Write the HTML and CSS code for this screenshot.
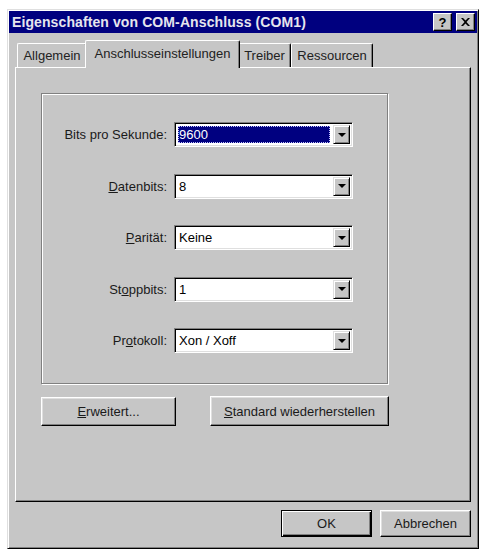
FILE: index.html
```html
<!DOCTYPE html>
<html lang="de">
<head>
    <meta charset="UTF-8">
    <meta name="viewport" content="width=device-width, initial-scale=1.0">
    <title>Eigenschaften von COM-Anschluss (COM1)</title>
    <link rel="stylesheet" href="styles.css">
</head>
<body>
    <div class="window">
        <!-- Titelleiste -->
        <div class="titlebar">
            <span class="title">Eigenschaften von COM-Anschluss (COM1)</span>
            <div class="title-buttons">
                <button class="tbtn help">?</button>
                <button class="tbtn close">
                    <svg width="9" height="8" viewBox="0 0 9 8">
                        <path d="M0 0h2l2.5 2.5L7 0h2L5.5 4 9 8H7L4.5 5.5 2 8H0l3.5-4z" fill="#000"/>
                    </svg>
                </button>
            </div>
        </div>

        <div class="content">
            <!-- Registerkarten -->
            <div class="tabs">
                <div class="tab tab-allgemein">Allgemein</div>
                <div class="tab active">Anschlusseinstellungen</div>
                <div class="tab tab-treiber">Treiber</div>
                <div class="tab tab-ressourcen">Ressourcen</div>
            </div>

            <div class="panel">
                <div class="group">
                    <label class="field-label">Bits pro Sekunde:</label>
                    <div class="combo">
                        <span class="combo-value selected"><span>9600</span></span>
                        <span class="combo-drop"><i class="arrow"></i></span>
                    </div>

                    <label class="field-label"><u>D</u>atenbits:</label>
                    <div class="combo">
                        <span class="combo-value">8</span>
                        <span class="combo-drop"><i class="arrow"></i></span>
                    </div>

                    <label class="field-label"><u>P</u>arität:</label>
                    <div class="combo">
                        <span class="combo-value">Keine</span>
                        <span class="combo-drop"><i class="arrow"></i></span>
                    </div>

                    <label class="field-label">St<u>o</u>ppbits:</label>
                    <div class="combo">
                        <span class="combo-value">1</span>
                        <span class="combo-drop"><i class="arrow"></i></span>
                    </div>

                    <label class="field-label">Pr<u>o</u>tokoll:</label>
                    <div class="combo">
                        <span class="combo-value">Xon / Xoff</span>
                        <span class="combo-drop"><i class="arrow"></i></span>
                    </div>
                </div>

                <div class="panel-buttons">
                    <button class="btn btn-erweitert"><u>E</u>rweitert...</button>
                    <button class="btn btn-standard"><u>S</u>tandard wiederherstellen</button>
                </div>
            </div>

            <!-- OK / Abbrechen -->
            <div class="footer">
                <button class="btn btn-footer default">OK</button>
                <button class="btn btn-footer">Abbrechen</button>
            </div>
        </div>
    </div>
</body>
</html>
```

FILE: styles.css
```css
body {
    margin: 0;
    background-color: #ffffff;
    font-family: "Liberation Sans", Arial, sans-serif;
    font-size: 13px;
    color: #000000;
}
.window {
    box-sizing: border-box;
    width: 472px;
    height: 540px;
    margin: 9px 0 0 7px;
    padding: 1px;
    background-color: #c6c6c6;
    border: 1px solid;
    border-color: #dfdfdf #000000 #000000 #dfdfdf;
    box-shadow: inset 1px 1px #ffffff, inset -1px -1px #808080;
    display: flex;
    flex-direction: column;
}
.titlebar {
    height: 22px;
    background-color: #00007f;
    display: flex;
    align-items: center;
    justify-content: space-between;
    padding: 0 2px 0 3px;
}
.title {
    color: #e6e6ee;
    font-weight: bold;
    font-size: 14px;
    letter-spacing: 0.1px;
}
.title-buttons {
    display: flex;
    gap: 4px;
}
.tbtn {
    width: 19px;
    height: 18px;
    padding: 0;
    background-color: #c6c6c6;
    border: 1px solid;
    border-color: #ffffff #000000 #000000 #ffffff;
    box-shadow: inset -1px -1px #808080;
    display: flex;
    align-items: center;
    justify-content: center;
    font-family: "Liberation Sans", Arial, sans-serif;
    font-weight: bold;
    font-size: 13px;
    line-height: 1;
}
.content {
    flex: 1;
    padding: 7px 6px 10px 6px;
    display: flex;
    flex-direction: column;
}

/* Registerkarten */
.tabs {
    height: 27px;
    display: flex;
    align-items: flex-end;
    padding-left: 2px;
}
.tab {
    box-sizing: border-box;
    height: 24px;
    padding: 0 7px;
    border-top: 1px solid #ffffff;
    border-left: 1px solid #ffffff;
    border-right: 1px solid #000000;
    border-radius: 2px 2px 0 0;
    box-shadow: inset -1px 0 #808080;
    display: flex;
    align-items: center;
    justify-content: center;
    color: #222222;
}
.tab-allgemein {
    width: 70px;
}
.tab-treiber {
    width: 53px;
}
.tab-ressourcen {
    width: 82px;
}
.tab.active {
    position: relative;
    z-index: 1;
    width: 155px;
    height: 28px;
    margin: 0 -2px -1px -2px;
    padding-bottom: 3px;
    background-color: #c6c6c6;
}

.panel {
    box-sizing: border-box;
    height: 435px;
    padding: 25px 0 0 25px;
    border: 1px solid;
    border-color: #ffffff #000000 #000000 #ffffff;
    box-shadow: inset -1px -1px #808080;
}
.group {
    box-sizing: border-box;
    width: 347px;
    height: 291px;
    padding: 28px 0 0 1px;
    border: 1px solid #808080;
    box-shadow: 1px 1px #ffffff, inset 1px 1px #ffffff;
    display: grid;
    grid-template-columns: 124px 179px;
    grid-auto-rows: 25px;
    column-gap: 7px;
    row-gap: 26.5px;
}
.field-label {
    display: flex;
    align-items: center;
    justify-content: flex-end;
    color: #1a1a1a;
}

/* Kombinationsfelder */
.combo {
    box-sizing: border-box;
    height: 25px;
    background-color: #ffffff;
    border: 1px solid;
    border-color: #808080 #ffffff #ffffff #808080;
    box-shadow: inset 1px 1px #000000, inset -1px -1px #dfdfdf;
    padding: 2px 2px 2px 2px;
    display: flex;
}
.combo-value {
    flex: 1;
    display: flex;
    align-items: center;
    padding-left: 2px;
}
.combo-value.selected {
    margin: 1px 3px 1px 1px;
    padding-left: 1px;
    background-color: #000080;
    color: #ffffff;
    outline: 1px dotted #c0c0ff;
    outline-offset: -1px;
}
.combo-drop {
    box-sizing: border-box;
    width: 17px;
    background-color: #c6c6c6;
    border: 1px solid;
    border-color: #dfdfdf #000000 #000000 #dfdfdf;
    box-shadow: inset 1px 1px #ffffff, inset -1px -1px #808080;
    display: flex;
    align-items: center;
    justify-content: center;
}
.arrow {
    width: 0;
    height: 0;
    border-left: 4px solid transparent;
    border-right: 4px solid transparent;
    border-top: 4px solid #000000;
}

/* Schaltflächen */
.btn {
    box-sizing: border-box;
    background-color: #c6c6c6;
    border: 1px solid;
    border-color: #ffffff #000000 #000000 #ffffff;
    box-shadow: inset -1px -1px #808080, inset 1px 1px #dfdfdf;
    font-family: "Liberation Sans", Arial, sans-serif;
    font-size: 13px;
    color: #1a1a1a;
    padding: 0;
}
.panel-buttons {
    display: flex;
    align-items: center;
    gap: 34px;
    margin-top: 12px;
}
.btn-erweitert {
    width: 135px;
    height: 29px;
}
.btn-standard {
    width: 179px;
    height: 30px;
}
.footer {
    display: flex;
    justify-content: flex-end;
    gap: 8px;
    margin-top: 8px;
}
.btn-footer {
    width: 91px;
    height: 27px;
}
.btn.default {
    border-color: #000000;
    box-shadow: inset 1px 1px #ffffff, inset -1px -1px #000000, inset -2px -2px #808080;
}
```
